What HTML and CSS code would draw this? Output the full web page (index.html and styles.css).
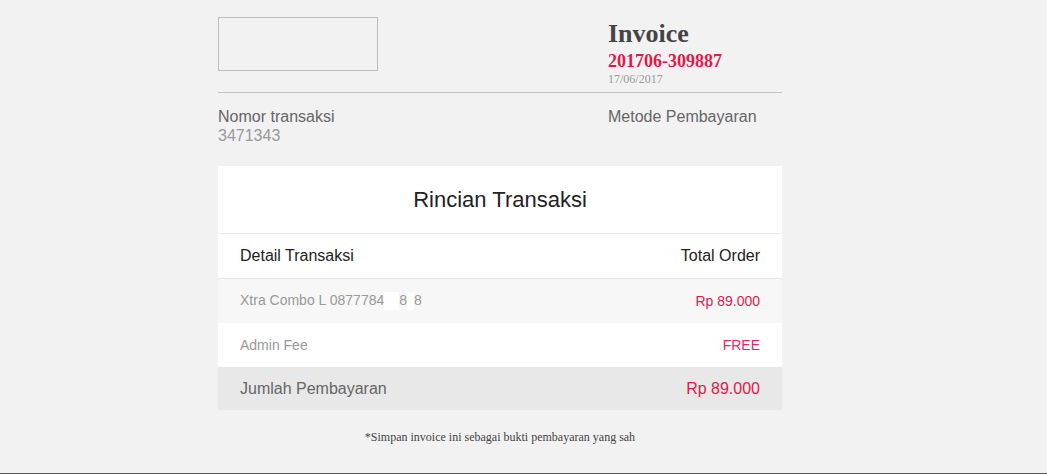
FILE: index.html
```html
<!DOCTYPE html>
<html>
<head>
<meta charset="utf-8">
<link rel="stylesheet" href="styles.css">
</head>
<body>
<div class="page">
  <div class="wrap">
    <header class="head">
      <div class="logo"></div>
      <div class="inv">
        <div class="inv-title">Invoice</div>
        <div class="inv-no">201706-309887</div>
        <div class="inv-date">17/06/2017</div>
      </div>
    </header>
    <div class="meta">
      <div class="meta-col">
        <div class="meta-label">Nomor transaksi</div>
        <div class="meta-value">3471343</div>
      </div>
      <div class="meta-col">
        <div class="meta-label">Metode Pembayaran</div>
      </div>
    </div>
    <section class="card">
      <h2 class="card-title">Rincian Transaksi</h2>
      <div class="row row-head"><span>Detail Transaksi</span><span>Total Order</span></div>
      <div class="row row-item"><span>Xtra Combo L 0877784<span class="mask m1"></span>8<span class="mask m2"></span>8</span><span class="red">Rp 89.000</span></div>
      <div class="row row-fee"><span>Admin Fee</span><span class="pink">FREE</span></div>
      <div class="row row-total"><span>Jumlah Pembayaran</span><span class="red">Rp 89.000</span></div>
    </section>
    <p class="note">*Simpan invoice ini sebagai bukti pembayaran yang sah</p>
  </div>
</div>
</body>
</html>
```

FILE: styles.css
```css
html, body { margin: 0; padding: 0; }
body { background: #f2f2f2; font-family: "Liberation Sans", Arial, sans-serif; }
.page { height: 473px; border-bottom: 1px solid #555; box-sizing: content-box; }
.wrap { width: 564px; margin-left: 218px; padding-top: 17px; }
.head { display: grid; grid-template-columns: 390px 1fr; border-bottom: 1px solid #c2c2c2; height: 75px; }
.logo { width: 158px; height: 52px; border: 1px solid #bdbdbd; }
.inv { font-family: "Liberation Serif", "Times New Roman", serif; padding-top: 2px; }
.inv-title { font-size: 26px; font-weight: bold; color: #444; line-height: 30px; }
.inv-no { font-size: 18px; font-weight: bold; color: #e0194d; line-height: 20px; margin-top: 2px; }
.inv-date { font-size: 12px; color: #999; line-height: 14px; margin-top: 1px; }
.meta { display: grid; grid-template-columns: 390px 1fr; padding-top: 15px; height: 58px; }
.meta-label { font-size: 16px; color: #666; line-height: 18px; }
.meta-value { font-size: 16px; color: #999; line-height: 20px; }
.card { background: #fff; }
.card-title { margin: 0; font-weight: normal; font-size: 22px; color: #222; text-align: center; height: 67px; line-height: 67px; border-bottom: 1px solid #e8e8e8; }
.row { display: flex; justify-content: space-between; align-items: center; padding: 0 22px; height: 44px; }
.row-head { font-size: 16px; color: #222; border-bottom: 1px solid #e8e8e8; }
.row-item { background: #f7f7f7; font-size: 14px; color: #999; }
.row-fee { background: #fff; font-size: 14px; color: #999; }
.row-total { background: #e8e8e8; font-size: 16px; color: #666; height: 43px; }
.red { color: #e0194d; }
.pink { color: #e5246a; }
.mask { display: inline-block; background: #fff; vertical-align: middle; height: 18px; }
.m1 { width: 15px; margin-right: 0; }
.m2 { width: 7px; }
.note { margin: 0; padding-top: 20px; text-align: center; font-family: "Liberation Serif", "Times New Roman", serif; font-size: 12px; color: #444; }
```
